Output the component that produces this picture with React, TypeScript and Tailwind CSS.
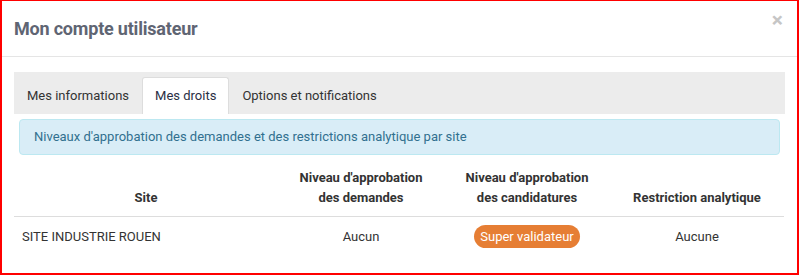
import React from 'react';

type Row = {
  site: string;
  demandes: string;
  candidatures: string;
  restriction: string;
};

const ROWS: Row[] = [
  {
    site: 'SITE INDUSTRIE ROUEN',
    demandes: 'Aucun',
    candidatures: 'Super validateur',
    restriction: 'Aucune',
  },
];

const TABS = ['Mes informations', 'Mes droits', 'Options et notifications'];

export default function App() {
  return (
    <div
      className="h-[275px] w-[799px] overflow-hidden bg-white text-[13px] text-[#333]"
      style={{ fontFamily: 'Roboto, "Liberation Sans", sans-serif' }}
    >
      <div className="h-[275px] w-[799px] border-x-2 border-b-2 border-t border-[#ff0000] bg-white">
        {/* Header */}
        <div className="flex h-[56px] items-center justify-between border-b border-[#e5e5e5] pl-[12px] pr-[14px]">
          <h1 className="text-[18px] font-bold leading-none tracking-[-0.2px] text-[#5f6573]">
            Mon compte utilisateur
          </h1>
          <span className="-mt-[16px] text-[21px] font-bold leading-none text-[#c6c6c6]">×</span>
        </div>

        {/* Body */}
        <div className="pl-[12px] pr-[12px] pt-[15px]">
          {/* Tabs */}
          <div className="flex h-[42px] items-end bg-[#ececec]">
            {TABS.map((tab) => {
              const active = tab === 'Mes droits';
              return (
                <div
                  key={tab}
                  className={`flex h-[37px] items-center border-x border-t px-[12px] pb-[1px] leading-[20px] ${
                    active
                      ? 'rounded-t-[3px] border-[#dddddd] bg-white text-[#2a2f45]'
                      : 'border-transparent text-[#333]'
                  }`}
                >
                  {tab}
                </div>
              );
            })}
          </div>

          {/* Alert */}
          <div className="mx-[5px] mt-[5px] rounded-[4px] border border-[#bce8f1] bg-[#d9edf7] px-[14px] py-[7px] leading-[20px] text-[#31708f]">
            Niveaux d'approbation des demandes et des restrictions analytique par site
          </div>

          {/* Table */}
          <table className="mt-[5px] w-[770px] table-fixed border-collapse">
            <colgroup>
              <col className="w-[264px]" />
              <col className="w-[166px]" />
              <col className="w-[166px]" />
              <col className="w-[174px]" />
            </colgroup>
            <thead>
              <tr className="border-b border-[#dddddd]">
                <th className="px-2 pb-[8px] pt-[8px] align-bottom font-bold leading-[20px]">Site</th>
                <th className="px-2 pb-[8px] pt-[8px] align-bottom font-bold leading-[20px]">
                  Niveau d'approbation
                  <br />
                  des demandes
                </th>
                <th className="px-2 pb-[8px] pt-[8px] align-bottom font-bold leading-[20px]">
                  Niveau d'approbation
                  <br />
                  des candidatures
                </th>
                <th className="px-2 pb-[8px] pt-[8px] align-bottom font-bold leading-[20px]">
                  Restriction analytique
                </th>
              </tr>
            </thead>
            <tbody>
              {ROWS.map((row) => (
                <tr key={row.site}>
                  <td className="px-[8px] py-[8px] text-left leading-[20px]">{row.site}</td>
                  <td className="px-2 py-[8px] text-center leading-[20px]">{row.demandes}</td>
                  <td className="px-2 py-[8px] text-center leading-[20px]">
                    <span className="inline-block rounded-full bg-[#e67e34] px-[6px] py-[2px] leading-[19px] text-white">
                      {row.candidatures}
                    </span>
                  </td>
                  <td className="px-2 py-[8px] text-center leading-[20px]">{row.restriction}</td>
                </tr>
              ))}
            </tbody>
          </table>
        </div>
      </div>
    </div>
  );
}
